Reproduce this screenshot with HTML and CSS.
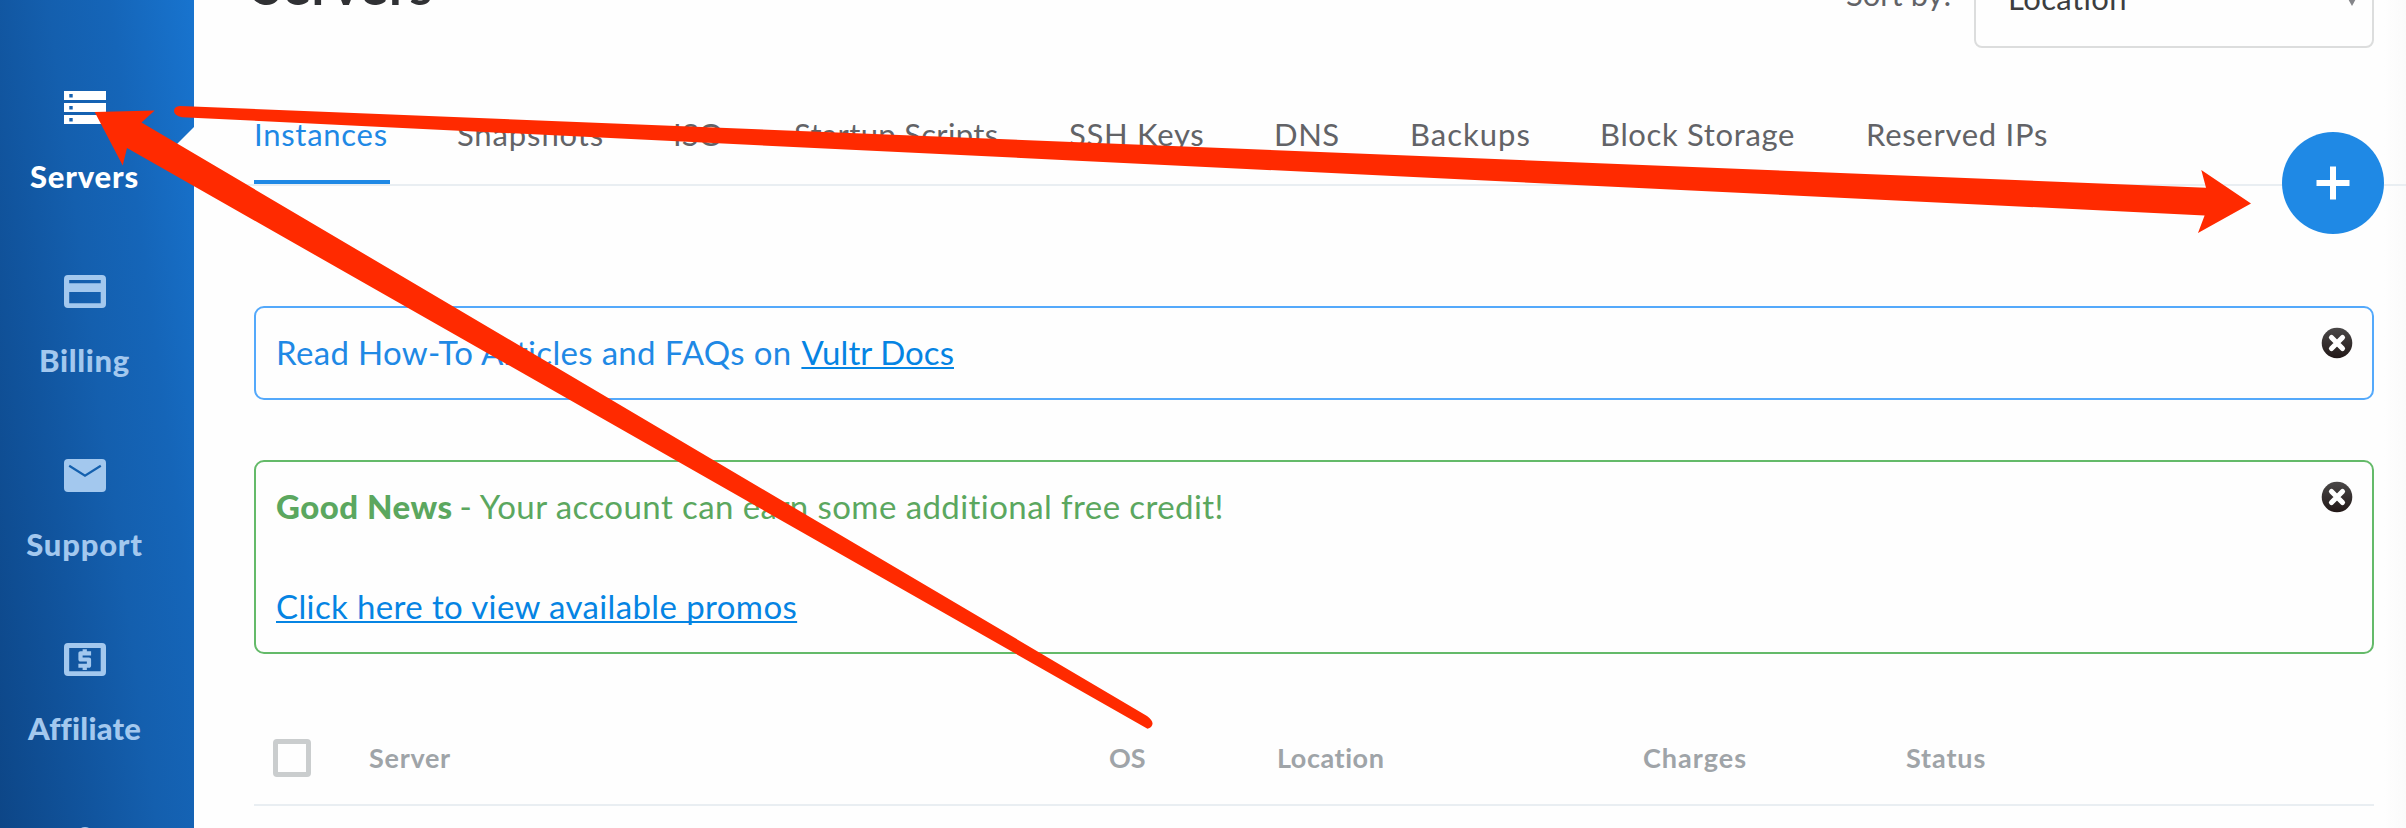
FILE: index.html
```html
<!DOCTYPE html>
<html lang="en">
<head>
<meta charset="utf-8">
<title>Servers</title>
<link rel="stylesheet" href="styles.css">
</head>
<body>
<div class="app">
  <aside class="sidebar">
    <a class="side-item active">
      <svg class="side-icon" width="42" height="33" viewBox="0 0 42 33"><path fill="currentColor" fill-rule="evenodd" d="M0 0h42v9H0zM5.300 3v3.500h3.400V3zM0 12h42v9H0zM5.300 15v3.500h3.400V15zM0 24h42v9H0zM5.300 27v3.500h3.400V27z"/></svg>
      <span class="ls-servers">Servers</span>
    </a>
    <a class="side-item">
      <svg class="side-icon" width="42" height="33" viewBox="0 0 42 33"><path fill="currentColor" fill-rule="evenodd" d="M4 0h34a4 4 0 0 1 4 4v25a4 4 0 0 1-4 4H4a4 4 0 0 1-4-4V4a4 4 0 0 1 4-4zM5.200 5v3.300h31.500V5zM5.200 17v11.200h31.500V17z"/></svg>
      <span class="ls-billing">Billing</span>
    </a>
    <a class="side-item">
      <svg class="side-icon" width="42" height="33" viewBox="0 0 42 33"><rect width="42" height="33" rx="4" fill="currentColor"/><path d="M5.200 6.800 21 16.600 36.800 6.800" fill="none" stroke="#1460ae" stroke-width="2.200"/></svg>
      <span class="ls-support">Support</span>
    </a>
    <a class="side-item">
      <svg class="side-icon" width="42" height="33" viewBox="0 0 42 33"><path fill="currentColor" fill-rule="evenodd" d="M4 0h34a4 4 0 0 1 4 4v25a4 4 0 0 1-4 4H4a4 4 0 0 1-4-4V4a4 4 0 0 1 4-4zM5.200 5v23.200h31.500V5z"/><path fill="currentColor" transform="translate(-4.700 -8.300) scale(2.120 2.070)" d="M11 17h2v-1h1c.55 0 1-.45 1-1v-3c0-.55-.45-1-1-1h-3v-1h4V8h-2V7h-2v1h-1c-.55 0-1 .45-1 1v3c0 .55.450 1 1 1h3v1H9v2h2z"/></svg>
      <span class="ls-affiliate">Affiliate</span>
    </a>
    <a class="side-item">
      <svg class="side-icon" width="42" height="33" viewBox="0 0 42 33"><circle cx="21" cy="8.300" r="8.300" fill="currentColor"/><path d="M4 33c0-10 34-10 34 0z" fill="currentColor"/></svg>
    </a>
    <i class="pointer"></i>
  </aside>

  <main class="main">
    <header class="header">
      <h1 class="title">Servers</h1>
      <label class="sort-label">Sort by:</label>
      <div class="select"><span>Location</span><i class="caret"></i></div>
    </header>

    <nav class="tabs">
      <a class="tab current ls-07">Instances</a>
      <a class="tab ls-09">Snapshots</a>
      <a class="tab ls-00">ISO</a>
      <a class="tab ls-03">Startup Scripts</a>
      <a class="tab ls-07">SSH Keys</a>
      <a class="tab ls-05">DNS</a>
      <a class="tab ls-10">Backups</a>
      <a class="tab ls-06">Block Storage</a>
      <a class="tab ls-07">Reserved IPs</a>
      <button class="add" aria-label="Add server"><svg width="34" height="34" viewBox="0 0 34 34"><path d="M17 .5v33M.5 17h33" stroke="#fff" stroke-width="6"/></svg></button>
    </nav>

    <section class="notice info">
      <p class="line"><span class="ls-03">Read How-To Articles and FAQs on</span><a class="link docs">Vultr Docs</a></p>
      <svg class="close" width="32" height="32" viewBox="0 0 32 32"><defs><linearGradient id="knob" x2="0" y2="1"><stop stop-color="#4a4848"/><stop offset="1" stop-color="#221817"/></linearGradient></defs><circle cx="16" cy="16" r="15.300" fill="url(#knob)"/><path d="m10.500 10.500 11 11m0-11-11 11" stroke="#fff" stroke-width="5.200" stroke-linecap="round"/></svg>
    </section>

    <section class="notice success">
      <p class="line"><b class="strong">Good News</b><span class="ls-news">- Your account can earn some additional free credit!</span></p>
      <p class="line"><a class="link promos">Click here to view available promos</a></p>
      <svg class="close" width="32" height="32" viewBox="0 0 32 32"><circle cx="16" cy="16" r="15.300" fill="url(#knob)"/><path d="m10.500 10.500 11 11m0-11-11 11" stroke="#fff" stroke-width="5.200" stroke-linecap="round"/></svg>
    </section>

    <div class="table-head">
      <span class="check"></span>
      <span class="ls-07">Server</span>
      <span class="ls-00">OS</span>
      <span class="ls-05">Location</span>
      <span class="ls-10">Charges</span>
      <span class="ls-09">Status</span>
    </div>
  </main>

  <svg class="arrows" width="2406" height="828" viewBox="0 0 2406 828">
    <path d="M180 106 2206 187.700 2201.300 170 2251 203.500 2198 233 2204.600 215.500 182 117.200Q174 115.500 174 111T180 106z"/>
    <path d="M94.700 112 154.700 110.500 141.500 122.500 1147 716Q1153 720.500 1152.500 724T1147.500 728.800L127 148 122.700 165.500z"/>
  </svg>
</div>
</body>
</html>
```
FILE: styles.css
```css
* { box-sizing: border-box; }

body {
  margin: 0;
  font-family: Lato, "Open Sans", sans-serif;
  font-size: 31px;
  line-height: 36px;
  color: #626367;
  background: #fefefe;
}

.app {
  position: relative;
  display: flex;
  height: 828px;
  overflow: hidden;
}

/* Sidebar */
.sidebar {
  position: relative;
  flex: none;
  width: 194px;
  height: 828px;
  padding: 91px 25px 0 0;
  overflow: hidden;
  background: linear-gradient(82.5deg, #0d4687 0%, #11559f 32%, #145fae 52%, #1565b8 72%, #1874cf 100%);
}
.side-item {
  display: flex;
  flex-direction: column;
  align-items: center;
  height: 184px;
  gap: 34px;
  font-weight: 900;
  color: #a3c8ee;
  white-space: nowrap;
}
.side-item.active { color: #fff; }
.side-icon { flex: none; }
.pointer {
  position: absolute;
  right: 0;
  top: 127px;
  border: 17px solid transparent;
  border-right-color: #fefefe;
  border-left-width: 0;
}

/* Main column */
.main {
  flex: 1;
  min-width: 0;
  background: linear-gradient(to left, #fafafa, #fefefe 22px);
}
.header {
  display: flex;
  align-items: center;
  height: 100px;
  margin-top: -52px;
  padding: 0 32px 0 59px;
}
.title {
  margin: 0 auto 0 0;
  padding-bottom: 26px;
  font-size: 52px;
  line-height: 60px;
  font-weight: 700;
  letter-spacing: 1.2px;
  color: #303134;
}
.sort-label {
  width: 128px;
  padding-bottom: 8px;
}
.select {
  display: flex;
  align-items: center;
  justify-content: space-between;
  width: 400px;
  height: 100px;
  padding: 0 15px 0 32px;
  border: 2px solid #dcdddd;
  border-radius: 8px;
  color: #3c3d40;
  letter-spacing: .4px;
}
.caret {
  margin-top: 6px;
  border: 5px solid transparent;
  border-top: 9px solid #85868a;
  border-bottom: 0;
}

.tabs {
  position: relative;
  display: grid;
  grid-template-columns: 203px 216px 121px 275px 205px 136px 190px 266px auto;
  justify-items: start;
  padding: 68px 0 0 60px;
  border-bottom: 2px solid #e9eef2;
  white-space: nowrap;
}
.tab {
  padding-bottom: 27px;
  border-bottom: 4px solid transparent;
  line-height: 37px;
}
.tab.current {
  width: 136px;
  color: #1f89e5;
  border-color: #1f89e5;
}
.add {
  position: absolute;
  right: 22px;
  bottom: -50px;
  display: grid;
  place-items: center;
  width: 102px;
  height: 102px;
  padding: 0;
  border: 0;
  border-radius: 50%;
  background: #1f89e5;
}

/* Notices */
.notice {
  position: relative;
  margin: 120px 32px 0 60px;
  padding: 19px 20px 0;
  border: 2px solid;
  border-radius: 10px;
  font-size: 33px;
}
.line {
  display: flex;
  margin: 0;
  line-height: 50px;
  white-space: nowrap;
}
.info {
  height: 94px;
  color: #1f89e5;
  border-color: #54a9fb;
}
.success {
  height: 194px;
  margin-top: 60px;
  color: #5ba75f;
  border-color: #64ba69;
}
.success .line + .line { margin-top: 50px; }
.link {
  color: #0584e3;
  text-decoration: underline;
  text-decoration-thickness: 2px;
  text-underline-offset: 2px;
  text-decoration-skip-ink: none;
}
.docs { margin-left: 10px; letter-spacing: .05px; }
.promos { letter-spacing: .38px; }
.strong {
  margin-right: 7px;
  font-weight: 900;
  letter-spacing: .5px;
}
.close {
  position: absolute;
  top: 19px;
  right: 19px;
}

/* Table header */
.table-head {
  display: grid;
  grid-template-columns: 96px 740px 168px 366px 263px 1fr;
  align-items: center;
  height: 95px;
  margin: 57px 32px 0 60px;
  padding-left: 19px;
  border-bottom: 2px solid #e9eef2;
  font-size: 27px;
  font-weight: 700;
  color: #9fa4a8;
}
.check {
  width: 38px;
  height: 38px;
  border: 5px solid #cacdce;
  border-radius: 4px;
}

/* Tracking per label */
.ls-servers, .ls-support { letter-spacing: .8px; }
.ls-billing { letter-spacing: .7px; }
.ls-affiliate { letter-spacing: .2px; }
.ls-news { letter-spacing: .42px; }
.ls-00 { letter-spacing: 0; }
.ls-03 { letter-spacing: .32px; }
.ls-05 { letter-spacing: .55px; }
.ls-06 { letter-spacing: .65px; }
.ls-07 { letter-spacing: .72px; }
.ls-09 { letter-spacing: .88px; }
.ls-10 { letter-spacing: 1px; }

.arrows {
  position: absolute;
  inset: 0;
  fill: #ff2a00;
  pointer-events: none;
}
```
